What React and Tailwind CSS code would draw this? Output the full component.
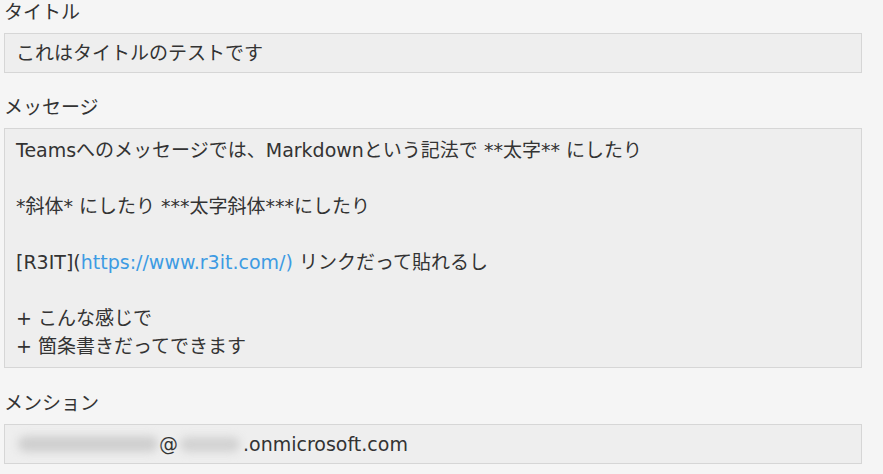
export default function App() {
  const font = { fontFamily: '"DejaVu Sans", "Noto Sans CJK JP", sans-serif' };
  return (
    <div className="min-h-[474px] w-full bg-[#f5f5f5] text-[#333333] text-[19px] pl-[4px]" style={font}>
      <div className="flex flex-col w-[858px]">
        <div className="leading-6 h-6 mb-[9px]">タイトル</div>
        <div className="border border-[#d6d6d6] bg-[#eeeeee] px-[11px] py-[5px] leading-7">
          これはタイトルのテストです
        </div>

        <div className="leading-6 h-6 mt-[22px] mb-[9px]">メッセージ</div>
        <div className="border border-[#d6d6d6] bg-[#eeeeee] px-[11px] py-[7px] leading-7">
          <div>Teamsへのメッセージでは、Markdownという記法で **太字** にしたり</div>
          <div>&nbsp;</div>
          <div>*斜体* にしたり ***太字斜体***にしたり</div>
          <div>&nbsp;</div>
          <div>
            [R3IT](<span className="text-[#3d9be3]">https://www.r3it.com/)</span> リンクだって貼れるし
          </div>
          <div>&nbsp;</div>
          <div>+ こんな感じで</div>
          <div>+ 箇条書きだってできます</div>
        </div>

        <div className="leading-6 h-6 mt-[23px] mb-[9px]">メンション</div>
        <div className="border border-[#d6d6d6] bg-[#eeeeee] px-[11px] py-[5px] leading-7 flex items-center overflow-hidden">
          <span className="relative inline-block w-[143px] h-7">
            <span className="absolute left-[2px] top-[6px] w-[140px] h-[16px] rounded-full bg-[#cfcfcf] blur-[4px]"></span>
          </span>
          <span>@</span>
          <span className="relative inline-block w-[65px] h-7">
            <span className="absolute left-[2px] top-[7px] w-[60px] h-[15px] rounded-full bg-[#d2d2d2] blur-[4px]"></span>
          </span>
          <span>.onmicrosoft.com</span>
        </div>
      </div>
    </div>
  );
}
